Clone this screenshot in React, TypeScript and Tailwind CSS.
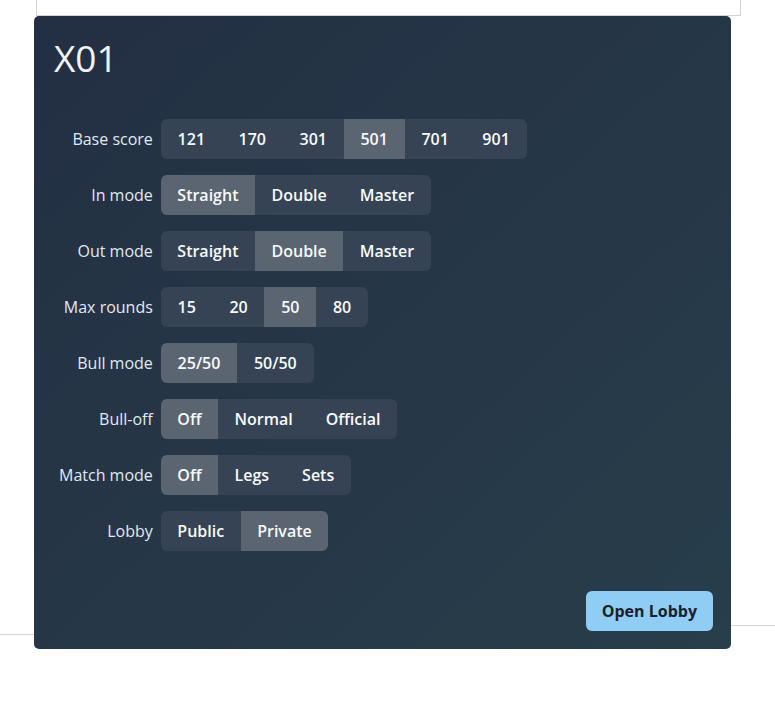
import React from "react";

type Row = { label: string; options: string[]; selected: number };

const rows: Row[] = [
  { label: "Base score", options: ["121", "170", "301", "501", "701", "901"], selected: 3 },
  { label: "In mode", options: ["Straight", "Double", "Master"], selected: 0 },
  { label: "Out mode", options: ["Straight", "Double", "Master"], selected: 1 },
  { label: "Max rounds", options: ["15", "20", "50", "80"], selected: 2 },
  { label: "Bull mode", options: ["25/50", "50/50"], selected: 0 },
  { label: "Bull-off", options: ["Off", "Normal", "Official"], selected: 0 },
  { label: "Match mode", options: ["Off", "Legs", "Sets"], selected: 0 },
  { label: "Lobby", options: ["Public", "Private"], selected: 1 },
];

export default function App() {
  return (
    <div
      className="relative w-[775px] h-[703px] bg-white overflow-hidden"
      style={{ fontFamily: '"Open Sans", "Noto Sans", sans-serif' }}
    >
      {/* background card outline */}
      <div className="absolute left-[36px] top-[-4px] w-[705px] h-[20px] border-l border-r border-b border-[#d4d4d4]" />
      <div className="absolute left-[731px] top-[625px] w-[44px] h-px bg-[#d4d4d4]" />
      <div className="absolute left-0 top-[634px] w-[34px] h-px bg-[#d4d4d4]" />

      <div className="absolute left-[34px] top-[16px] w-[697px] h-[633px] rounded-[5px] bg-gradient-to-br from-[#232f43] to-[#283e4b] pt-5 pl-5 pr-[18px] pb-[19px] flex flex-col">
        <h1 className="text-[37px] leading-[1.2] text-[#f1f3f5] font-normal">X01</h1>
        <div className="mt-[39px] grid grid-cols-[auto_auto] justify-start gap-x-2 gap-y-4">
          {rows.map((r) => (
            <React.Fragment key={r.label}>
              <div className="h-10 flex items-center justify-end text-base text-[#e2e8f0] pl-[5px]">{r.label}</div>
              <div className="flex justify-start">
                <div className="flex rounded-md overflow-hidden bg-[#364354]">
                  {r.options.map((o, i) => {
                    const numeric = /^[0-9/]+$/.test(o);
                    return (
                      <div
                        key={o}
                        className={
                          "h-10 flex items-center text-base font-semibold text-[#f7fafc] " +
                          (numeric ? "px-[16.75px] " : "px-[16.5px] ") +
                          (i === r.selected ? "bg-[#5a6571]" : "")
                        }
                      >
                        {o}
                      </div>
                    );
                  })}
                </div>
              </div>
            </React.Fragment>
          ))}
        </div>
        <div className="mt-auto flex justify-end mb-[-1px]">
          <button className="h-10 px-4 rounded-md bg-[#90cdf4] text-[#1a202c] text-base font-bold">
            Open Lobby
          </button>
        </div>
      </div>
    </div>
  );
}
